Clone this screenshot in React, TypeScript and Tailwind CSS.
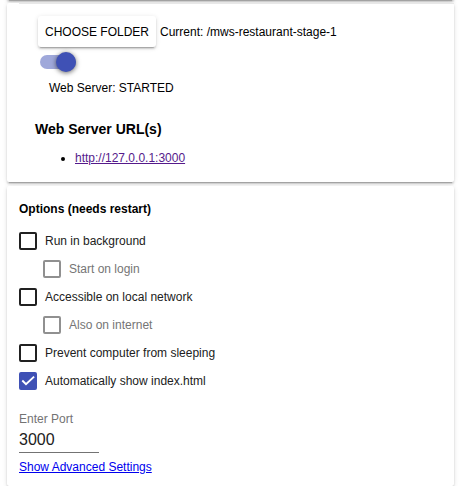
import { useState } from "react";

const cardShadow =
  "shadow-[0_2px_2px_0_rgba(0,0,0,0.14),0_1px_5px_0_rgba(0,0,0,0.12),0_3px_1px_-2px_rgba(0,0,0,0.2)]";

type OptionProps = {
  label: string;
  defaultChecked?: boolean;
  disabled?: boolean;
};

function Option({ label, defaultChecked = false, disabled = false }: OptionProps) {
  return (
    <label
      className={`flex h-7 items-center gap-2 ${disabled ? "pl-6 text-[#757575]" : "text-[#212121]"}`}
    >
      <span className="grid size-[18px] shrink-0">
        <input
          type="checkbox"
          defaultChecked={defaultChecked}
          disabled={disabled}
          className="peer col-start-1 row-start-1 size-[18px] appearance-none rounded-[2px] border-2 border-[#212121] checked:border-[#3f51b5] checked:bg-[#3f51b5] disabled:border-[#909090]"
        />
        <svg
          viewBox="0 0 18 18"
          fill="none"
          stroke="white"
          strokeWidth="1.9"
          className="pointer-events-none invisible col-start-1 row-start-1 size-[18px] peer-checked:visible"
        >
          <path d="M3.3 8.5 7 12.2 15.1 4.6" />
        </svg>
      </span>
      {label}
    </label>
  );
}

export default function App() {
  const [running, setRunning] = useState(true);

  return (
    <main className="bg-white px-[7px] font-['Liberation_Sans',Arial,sans-serif] text-xs leading-4 text-black">
      {/* Lower edge of the header card, scrolled out above the page */}
      <div className={`-mt-8 h-8 rounded-[2px] bg-white ${cardShadow}`} />
      <div className="flex flex-col gap-1 pt-[3px]">
        <section className={`rounded-[2px] bg-white pb-4 ${cardShadow}`}>
          <div className="ml-3 h-px bg-[#e8e8e8]" />
          <div className="px-7 pt-3">
            <div className="flex items-center gap-1 pl-[3px]">
              <button
                type="button"
                className="h-[31px] rounded-[3px] bg-white px-[7px] uppercase shadow-[0_2px_2px_0_rgba(0,0,0,0.14),0_1px_5px_0_rgba(0,0,0,0.12),0_3px_1px_-2px_rgba(0,0,0,0.2)]"
              >
                Choose folder
              </button>
              <span>Current: /mws-restaurant-stage-1</span>
            </div>
            <div className="pt-[5px] pl-[5px]">
              <button
                type="button"
                role="switch"
                aria-checked={running}
                aria-label="Web Server"
                onClick={() => setRunning(!running)}
                className="group grid h-5 w-9 items-center"
              >
                <span className="col-start-1 row-start-1 h-[14px] w-9 rounded-full bg-black/40 group-aria-checked:bg-[#3f51b5]/50" />
                <span className="col-start-1 row-start-1 size-5 rounded-full bg-white shadow-[0_1px_5px_0_rgba(0,0,0,0.6)] group-aria-checked:justify-self-end group-aria-checked:bg-[#3f51b5]" />
              </button>
            </div>
            <p className="pt-2 pl-[14px]">Web Server: {running ? "STARTED" : "STOPPED"}</p>
            <h3 className="pt-[25px] text-sm leading-4 font-bold">Web Server URL(s)</h3>
            <ul className="list-disc pt-[13px] pl-10">
              <li>
                <a href="http://127.0.0.1:3000" className="text-[#551a8b] underline">
                  http://127.0.0.1:3000
                </a>
              </li>
            </ul>
          </div>
        </section>
        <section className={`rounded-[2px] bg-white px-3 pt-[15px] pb-[11px] ${cardShadow}`}>
          <h4 className="pb-2.5 font-bold">Options (needs restart)</h4>
          <Option label="Run in background" />
          <Option label="Start on login" disabled />
          <Option label="Accessible on local network" />
          <Option label="Also on internet" disabled />
          <Option label="Prevent computer from sleeping" />
          <Option label="Automatically show index.html" defaultChecked />
          <div className="flex flex-col items-start pt-4">
            <label htmlFor="port" className="text-[#737373]">
              Enter Port
            </label>
            <input
              id="port"
              type="text"
              inputMode="numeric"
              defaultValue="3000"
              className="h-[26px] w-20 border-b border-[#737373] text-base text-[#212121] outline-none"
            />
            <a href="#advanced" className="pt-1.5 text-[#0000ee] underline">
              Show Advanced Settings
            </a>
          </div>
        </section>
      </div>
    </main>
  );
}
